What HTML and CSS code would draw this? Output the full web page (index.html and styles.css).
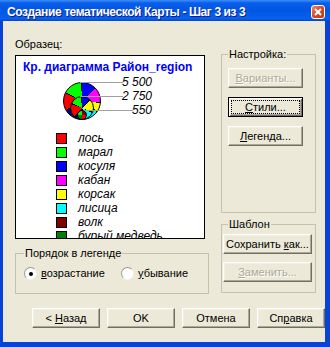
FILE: index.html
```html
<!DOCTYPE html>
<html lang="ru">
<head>
    <meta charset="UTF-8">
    <title>Создание тематической Карты - Шаг 3 из 3</title>
    <link rel="stylesheet" href="styles.css">
</head>
<body>
<div class="window">
    <div class="titlebar">
        <span class="title">Создание тематической Карты - Шаг 3 из 3</span>
        <span class="close">
            <svg width="8" height="8" viewBox="0 0 8 8"><path d="M1 1L7 7M7 1L1 7" stroke="#fff" stroke-width="2"/></svg>
        </span>
    </div>
    <div class="client">
        <div class="main">
            <div class="left">
                <div class="label">Образец:</div>
                <div class="sample">
                    <div class="sample-title">Кр. диаграмма Район_region</div>
                    <div class="chart">
                        <div class="pie pie-big"></div>
                        <div class="pie pie-mid"></div>
                        <div class="pie pie-small"></div>
                        <div class="lead lead1"></div>
                        <div class="lead lead2"></div>
                        <div class="lead lead3"></div>
                        <span class="val val1">5 500</span>
                        <span class="val val2">2 750</span>
                        <span class="val val3">550</span>
                    </div>
                    <ul class="legend">
                        <li><i class="sw c-red"></i>лось</li>
                        <li><i class="sw c-lime"></i>марал</li>
                        <li><i class="sw c-blue"></i>косуля</li>
                        <li><i class="sw c-magenta"></i>кабан</li>
                        <li><i class="sw c-yellow"></i>корсак</li>
                        <li><i class="sw c-cyan"></i>лисица</li>
                        <li><i class="sw c-maroon"></i>волк</li>
                        <li><i class="sw c-green"></i>бурый медведь</li>
                    </ul>
                </div>
                <fieldset class="group order">
                    <legend>Порядок в легенде</legend>
                    <div class="radios">
                        <label class="opt"><span class="radio on"></span><span><u>в</u>озрастание</span></label>
                        <label class="opt"><span class="radio"></span><span><u>у</u>бывание</span></label>
                    </div>
                </fieldset>
            </div>
            <div class="right">
                <fieldset class="group settings">
                    <legend>Настройка:</legend>
                    <button class="btn disabled"><u>В</u>арианты...</button>
                    <button class="btn default"><u>С</u>тили...</button>
                    <button class="btn"><u>Л</u>егенда...</button>
                </fieldset>
                <fieldset class="group template">
                    <legend>Шаблон</legend>
                    <button class="btn wide">Сохранить <u>к</u>ак...</button>
                    <button class="btn wide disabled"><u>З</u>аменить...</button>
                </fieldset>
            </div>
        </div>
        <div class="footer">
            <button class="btn small">&lt; <u>Н</u>азад</button>
            <button class="btn small">OK</button>
            <button class="btn small">Отмена</button>
            <button class="btn small">Сп<u>р</u>авка</button>
        </div>
    </div>
</div>
</body>
</html>
```

FILE: styles.css
```css
body {
    margin: 0;
    font-family: "Liberation Sans", Arial, sans-serif;
    font-size: 11px;
    color: #000;
}

.window {
    width: 330px;
    height: 347px;
    display: flex;
    flex-direction: column;
    background: #0842d6;
}

.titlebar {
    height: 21px;
    box-sizing: border-box;
    padding: 2px 5px 0 7px;
    display: flex;
    align-items: center;
    justify-content: space-between;
    background: linear-gradient(#3d8ffc 0, #0a5ee8 3px, #0056e4 50%, #0a60ee 88%, #0048cc 100%);
    color: #fff;
}
.title {
    font-weight: bold;
    font-size: 12px;
    letter-spacing: -0.4px;
    text-shadow: 1px 1px #0a1c86;
    white-space: nowrap;
}
.close {
    width: 14px;
    height: 14px;
    box-sizing: border-box;
    border: 1px solid #fff;
    border-radius: 3px;
    background: linear-gradient(135deg, #f08a6c, #dc4a26 45%, #c2350f);
    display: flex;
    align-items: center;
    justify-content: center;
}

.client {
    flex: 1;
    margin: 0 5px 5px 3px;
    background: #ece9d8;
    padding: 17px 0 0 12px;
}

.main {
    display: grid;
    grid-template-columns: 194px 95px;
    column-gap: 12px;
    align-items: start;
}
.left {
    display: flex;
    flex-direction: column;
}
.label {
    height: 13px;
    line-height: 13px;
}

.sample {
    margin-top: 4px;
    width: 190px;
    height: 184px;
    box-sizing: border-box;
    border: 1px solid #000;
    background: #fff;
    overflow: hidden;
}
.sample-title {
    padding: 4px 0 0 7px;
    line-height: 14px;
    font-size: 12px;
    font-weight: bold;
    color: #0000ff;
    white-space: nowrap;
}

.chart {
    position: relative;
    width: 100px;
    height: 44px;
    margin: 6px 0 0 44px;
}
.pie {
    position: absolute;
    box-sizing: border-box;
    border: 1px solid #000;
    border-radius: 50%;
}
.pie-big {
    left: 3px;
    top: 2px;
    width: 38px;
    height: 38px;
    background: conic-gradient(#00f 0 44deg, #000 44deg 47deg, #f0f 47deg 93deg, #000 93deg 96deg,
        #ff0 96deg 124deg, #000 124deg 127deg, #0ff 127deg 156deg, #000 156deg 159deg,
        #008000 159deg 178deg, #800000 178deg 200deg, #000 200deg 203deg, #000080 203deg 238deg,
        #000 238deg 241deg, #f00 241deg 295deg, #000 295deg 298deg, #0f0 298deg 357deg, #000 357deg 360deg);
}
.pie-mid {
    left: 10px;
    top: 16px;
    width: 24px;
    height: 24px;
    background: conic-gradient(#00f 0 40deg, #000 40deg 46deg, #ff0 46deg 110deg, #000 110deg 116deg,
        #0ff 116deg 160deg, #000 160deg 166deg, #000080 166deg 215deg, #000 215deg 221deg,
        #f00 221deg 290deg, #000 290deg 296deg, #0f0 296deg 354deg, #000 354deg 360deg);
}
.pie-small {
    left: 17px;
    top: 30px;
    width: 10px;
    height: 10px;
    background: conic-gradient(#800000 0 90deg, #f00 90deg 180deg, #008000 180deg 270deg, #0f0 270deg 360deg);
}
.lead {
    position: absolute;
    height: 1px;
    background: #a0a0a0;
}
.lead1 { left: 20px; top: 2px; width: 43px; }
.lead2 { left: 20px; top: 16px; width: 43px; }
.lead3 { left: 25px; top: 30px; width: 48px; }
.val {
    position: absolute;
    right: 8px;
    line-height: 14px;
    font-size: 12px;
    font-style: italic;
    white-space: nowrap;
}
.val1 { top: -5px; }
.val2 { top: 9px; }
.val3 { top: 23px; }

.legend {
    list-style: none;
    margin: 7px 0 0 40px;
    padding: 0;
}
.legend li {
    display: flex;
    align-items: center;
    gap: 11px;
    height: 14px;
    font-size: 12px;
    font-style: italic;
    white-space: nowrap;
}
.sw {
    width: 11px;
    height: 11px;
    box-sizing: border-box;
    border: 1px solid #000;
    flex: none;
}
.c-red { background: #f00; }
.c-lime { background: #0f0; }
.c-blue { background: #00f; }
.c-magenta { background: #f0f; }
.c-yellow { background: #ff0; }
.c-cyan { background: #0ff; }
.c-maroon { background: #800000; }
.c-green { background: #008000; }

.group {
    margin: 0;
    min-width: 0;
    border: 1px solid #c5c2b2;
    border-radius: 0;
}
.group legend {
    padding: 0 1px;
    line-height: 13px;
}
.order {
    margin-top: 8px;
    padding: 7px 8px 13px 8px;
}
.radios {
    display: grid;
    grid-template-columns: 97px auto;
}
.opt {
    display: flex;
    align-items: center;
    gap: 4px;
    line-height: 13px;
}
.radio {
    width: 13px;
    height: 13px;
    box-sizing: border-box;
    border-radius: 50%;
    border: 1px solid;
    border-color: #9d9a8c #f4f3ee #f4f3ee #9d9a8c;
    background: #fff;
    display: flex;
    align-items: center;
    justify-content: center;
}
.radio.on::after {
    content: "";
    width: 4px;
    height: 4px;
    border-radius: 50%;
    background: #000;
}

.right {
    display: flex;
    flex-direction: column;
}
.settings {
    margin-top: 10px;
    padding: 7px 6px 66px 6px;
    display: flex;
    flex-direction: column;
    align-items: flex-start;
    gap: 9px;
}
.template {
    margin-top: 5px;
    padding: 3px 1px 10px 1px;
    display: flex;
    flex-direction: column;
    align-items: flex-start;
    gap: 8px;
}
.template legend {
    margin-left: 5px;
}

.btn {
    width: 75px;
    height: 20px;
    padding: 0;
    box-sizing: border-box;
    font: 11px "Liberation Sans", Arial, sans-serif;
    color: #000;
    background: #ece9d8;
    border: 1px solid;
    border-color: #fff #716f64 #716f64 #fff;
    box-shadow: inset -1px -1px #aca899, inset 1px 1px #f1efe2;
    white-space: nowrap;
}
.btn.default {
    border: 1px solid #000;
    box-shadow: inset 1px 1px #fff, inset -1px -1px #716f64, inset 2px 2px #f1efe2, inset -2px -2px #aca899;
    outline: 1px dotted #000;
    outline-offset: -4px;
}
.btn.disabled {
    color: #aca899;
    text-shadow: 1px 1px #fff;
}
.btn.wide {
    width: 89px;
}
.btn.small {
    width: 68px;
}

.footer {
    margin-top: 14px;
    padding-left: 17px;
    display: flex;
    gap: 7px;
}
```
